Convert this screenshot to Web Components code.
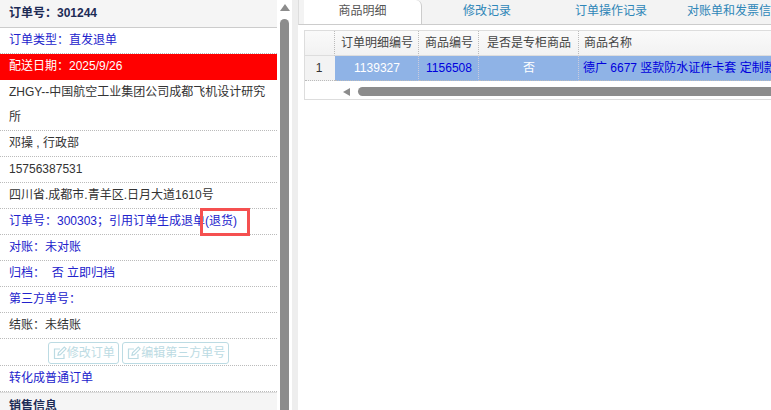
<!DOCTYPE html>
<html lang="zh"><head><meta charset="utf-8"><style>
html,body{margin:0;padding:0;width:771px;height:410px;overflow:hidden;background:#fff;font:12px "Liberation Sans","Noto Sans CJK SC",sans-serif}
</style></head><body>
<order-app></order-app>
<script>
const def=(n,css,html)=>customElements.define(n,class extends HTMLElement{constructor(){super();this.attachShadow({mode:'open'}).innerHTML=`<style>${css}</style>${html}`;}});
const FONT='"Liberation Sans","Noto Sans CJK SC",sans-serif';
def('info-row',`:host{display:block;box-sizing:border-box;padding:0 0 0 9px;border-bottom:1px dotted #bbb;color:#333;font:12px/25px ${FONT}}
:host([link]){color:#2222cc}:host([alert]){background:#f00;color:#fff;border-bottom-color:#f00}
:host([center]){text-align:center;padding:0;height:27px}`,`<slot></slot>`);
def('section-head',`:host{display:block;background:#f5f5f5;color:#1d2b55;font:bold 12px/27px ${FONT};padding-left:9px;height:27px;border-bottom:1px solid #ccc}`,`<slot></slot>`);
def('edit-btn',`:host{display:inline-flex;align-items:center;height:22px;box-sizing:border-box;border:1px solid #bcdbe3;border-radius:3px;color:#bcdbe3;font:12px/20px ${FONT};padding:0 3px 0 4px;margin:3px 0 0 0;vertical-align:top;background:#fff}
svg{width:14px;height:14px;flex:none}`,`<svg viewBox="0 0 14 14" fill="none" stroke="#bcdbe3" stroke-width="1.2"><path d="M11 8v4.5H1.5V3H7"/><path d="M5 9.2l.5-2.4L11.3 1l1.8 1.8-5.8 5.8z"/></svg><slot></slot>`);
def('v-scroll',`:host{display:flex;flex-direction:column;align-items:center;width:15px;flex:none;background:#fff}
.a{width:0;height:0;border:5px solid transparent;border-top:0;border-bottom:7px solid #8c8c8c;margin:4px 0 8px}
.t{flex:1;width:9px;background:#8c8c8c;border-radius:5px 5px 0 0}`,`<div class="a"></div><div class="t"></div>`);
def('order-panel',`:host{display:flex;width:292px;height:410px;flex:none;overflow:hidden;position:relative}
.c{width:277px;flex:none}
.box{position:absolute;left:200px;top:208px;width:50px;height:28px;box-sizing:border-box;border:3px solid #f55050}`,`<div class="c">
<section-head>订单号：301244</section-head>
<info-row link>订单类型：直发退单</info-row>
<info-row alert>配送日期：2025/9/26</info-row>
<info-row>ZHGY--中国航空工业集团公司成都飞机设计研究所</info-row>
<info-row>邓操 , 行政部</info-row>
<info-row>15756387531</info-row>
<info-row>四川省.成都市.青羊区.日月大道1610号</info-row>
<info-row link>订单号：300303；引用订单生成退单(退货)</info-row>
<info-row link>对账：未对账</info-row>
<info-row link>归档： &nbsp;否 立即归档</info-row>
<info-row link>第三方单号：</info-row>
<info-row>结账：未结账</info-row>
<info-row center><edit-btn>修改订单</edit-btn> <edit-btn>编辑第三方单号</edit-btn></info-row>
<info-row link>转化成普通订单</info-row>
<section-head style="border-top:1px solid #ddd">销售信息</section-head>
</div><v-scroll></v-scroll><div class="box"></div>`);
def('tab-bar',`:host{display:flex;height:25px;box-sizing:border-box;background:#f3f3f3;border-bottom:1px solid #ccc;border-left:1px solid #ddd;padding-left:5px;font:12px/22px ${FONT};color:#2e86b8;white-space:nowrap;overflow:hidden;flex:none}
span{flex:none;text-align:center;box-sizing:border-box}
.on{width:118px;height:25px;background:#fff;color:#555;border-radius:0 6px 0 0;border-right:1px solid #ccc}
.n{width:124px;padding-left:6px}`,`<span class="on">商品明细</span><span class="n">修改记录</span><span class="n">订单操作记录</span><span style="width:140px;padding-right:10px">对账单和发票信息</span>`);
def('detail-grid',`:host{display:block;margin:5px 0 0 6px;width:480px;box-sizing:border-box;border:solid #ddd;border-width:1px 0 1px 1px;font:12px ${FONT};overflow:hidden;color:#444}
.r{display:grid;grid-template-columns:30px 84px 60px 100px 300px;white-space:nowrap}
.h>div{height:24px;line-height:24px;background:linear-gradient(#fafafa,#f2f2f2);border-right:1px dotted #bbb;border-bottom:1px solid #ddd;text-align:center;padding-left:1px}
.h>div:last-child{text-align:left;padding-left:5px;border-right:0}
.b>div{height:24px;line-height:24px;background:#8fb3e6;color:#fff;text-align:center;border-right:1px dotted #ccd;border-bottom:1px dotted #bbb;padding-left:1px}
.b>div:first-child{background:#f3f3f3;color:#333;border-right:0;padding:0 2px 0 0}
.b .l{color:#0000dd}.b>div:last-child{text-align:left;padding-left:4px;border-right:0}
.s{display:flex;align-items:center;height:18px;box-sizing:border-box;padding:3px 0 0 38px}
.s i{width:0;height:0;border:4.5px solid transparent;border-left:0;border-right:7px solid #8c8c8c;margin-right:8px}
.s b{flex:1;height:9px;background:#8c8c8c;border-radius:5px 0 0 5px}`,
`<div class="r h"><div></div><div>订单明细编号</div><div>商品编号</div><div>是否是专柜商品</div><div>商品名称</div></div>
<div class="r b"><div>1</div><div>1139327</div><div class="l">1156508</div><div>否</div><div class="l">德广 6677 竖款防水证件卡套 定制款</div></div>
<div class="s"><i></i><b></b></div>`);
def('order-app',`:host{display:flex;width:771px;height:410px;overflow:hidden}
.split{width:6px;flex:none;background:#eee}
.main{flex:1;min-width:0;display:flex;flex-direction:column;overflow:hidden}`,
`<order-panel></order-panel><div class="split"></div><div class="main"><tab-bar></tab-bar><detail-grid></detail-grid></div>`);
</script></body></html>
